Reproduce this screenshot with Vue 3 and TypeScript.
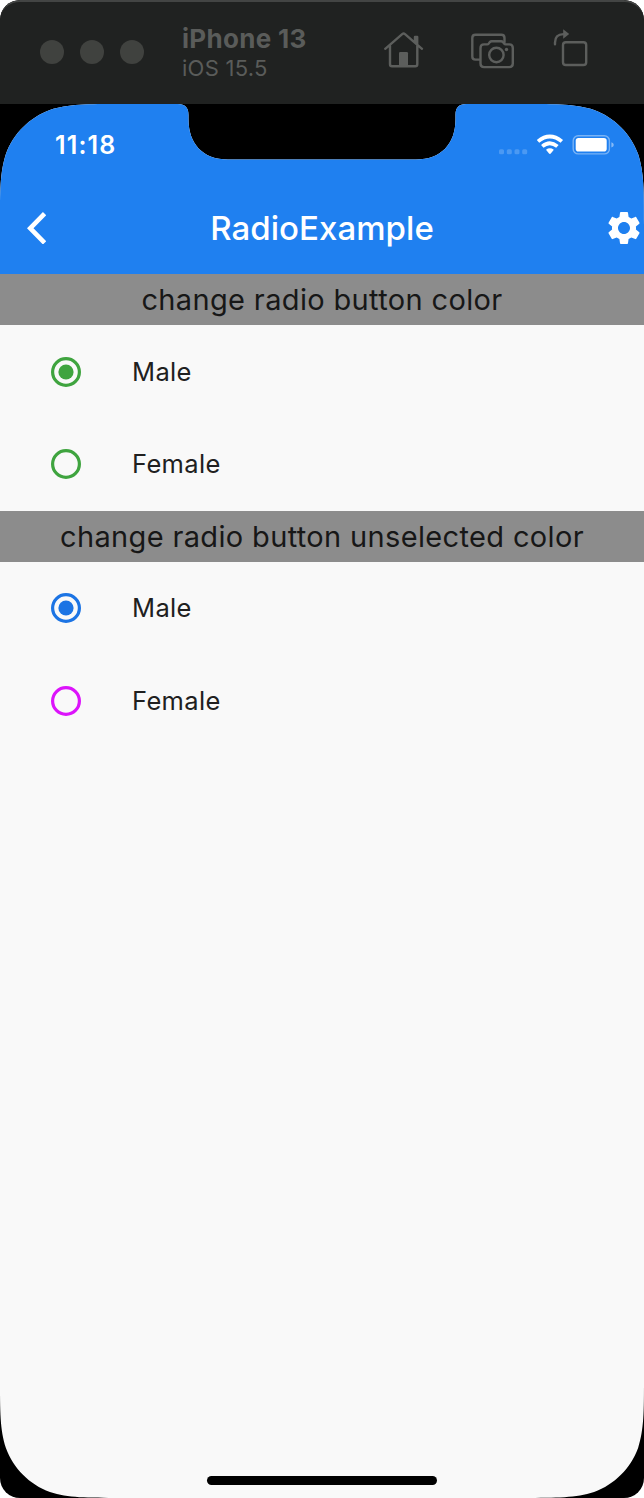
<script setup lang="ts">
import { ref } from 'vue'

interface RadioGroup {
  id: string
  title: string
  selected: string
  activeColor: string
  inactiveColor: string
}

const options: string[] = ['Male', 'Female']

const groups = ref<RadioGroup[]>([
  {
    id: 'color',
    title: 'change radio button color',
    selected: 'Male',
    activeColor: '#3fa43f',
    inactiveColor: '#3fa43f',
  },
  {
    id: 'unselected',
    title: 'change radio button unselected color',
    selected: 'Male',
    activeColor: '#1c74e4',
    inactiveColor: '#dc14fb',
  },
])

function colorOf(group: RadioGroup, option: string): string {
  return group.selected === option ? group.activeColor : group.inactiveColor
}
</script>

<template>
  <div class="window">
    <header class="titlebar">
      <div class="lights">
        <span class="light"></span>
        <span class="light"></span>
        <span class="light"></span>
      </div>
      <div class="device">
        <div class="device-name">iPhone 13</div>
        <div class="device-os">iOS 15.5</div>
      </div>
      <div class="tools">
        <svg class="tool" width="42" height="42" viewBox="383 29 42 42">
          <path d="M385.2 48.8 402.2 34.2Q403.6 33 405 34.2L422 48.8M390 46V64.2Q390 66.2 392 66.2H415.3Q417.3 66.2 417.3 64.2V46M415 41.5V37H417.2V43.8" />
          <path class="solid" d="M399 53.2q0-1.2 1.2-1.2h6.6q1.2 0 1.2 1.2V66h-9z" />
        </svg>
        <svg class="tool" width="46" height="42" viewBox="470 29 46 42">
          <path d="M479.6 59.6H475.5Q472.3 59.6 472.3 56.4V38Q472.3 34.8 475.5 34.8H501.3Q504.5 34.8 504.5 38V42.2" />
          <path d="M484 44.4h3.1q1 0 1.6-.8l1-1.3q.8-1 2.1-1h9.2q1.3 0 2.1 1l1 1.3q.6.8 1.6.8h3.6q3.5 0 3.5 3.5v15.7q0 3.500-3.500 3.500H484q-3.500 0-3.500-3.500V47.900q0-3.500 3.500-3.500z" />
          <circle cx="496.400" cy="55" r="7.200" />
          <circle class="solid" cx="506.500" cy="49.500" r="1.700" />
        </svg>
        <svg class="tool" width="36" height="42" viewBox="553 29 36 42">
          <rect x="563" y="42.300" width="23.200" height="22.700" rx="2.800" />
          <path d="M555 44.200V42.500Q555 34.200 563.500 34.100" />
          <path class="solid" d="M563.200 29.300 569.200 34 563.200 38.800z" />
        </svg>
      </div>
    </header>

    <main class="screen">
      <div class="appbar">
        <div class="statusbar">
          <span class="clock">11:18</span>
          <svg class="indicators" width="116" height="24" viewBox="498 133 116 24">
            <g fill="#fff" fill-opacity="0.2">
              <rect x="499" y="149.200" width="5" height="5" rx="1.500" />
              <rect x="506.800" y="149.200" width="5" height="5" rx="1.500" />
              <rect x="514.500" y="149.200" width="5" height="5" rx="1.500" />
              <rect x="522.200" y="149.200" width="5" height="5" rx="1.500" />
            </g>
            <g fill="none" stroke="#fff" stroke-width="3.800">
              <path d="M538 141.400Q549.800 131.500 561.800 141.400" />
              <path d="M542.300 146.400Q549.800 140 557.400 146.400" />
            </g>
            <path fill="#fff" d="M546 149.700q3.900-2.900 7.800 0l-3 3.900q-.9.900-1.800 0z" />
            <rect x="573.200" y="135.700" width="36.200" height="18.200" rx="5" fill="none" stroke="#fff" stroke-opacity="0.4" stroke-width="1.400" />
            <rect x="575.700" y="138" width="31" height="13.600" rx="2.800" fill="#fff" />
            <path fill="#fff" fill-opacity="0.45" d="M611.400 142.200q2.400.9 2.400 2.700t-2.400 2.700z" />
          </svg>
        </div>
        <div class="navbar">
          <svg class="back" width="19.200" height="32.500" viewBox="0 2.100 11.670 19.800" preserveAspectRatio="none">
            <path fill="#fff" d="M11.670 4.100 9.700 2.100 0 12l9.700 9.900 1.970-2L3.950 12z" />
          </svg>
          <h1 class="title">RadioExample</h1>
          <svg class="gear" width="40" height="40" viewBox="0 0 24 24">
            <path fill="#fff" d="M19.140 12.940c.04-.3.06-.61.06-.94 0-.32-.02-.64-.07-.94l2.030-1.580c.18-.14.23-.41.12-.61l-1.920-3.320c-.12-.22-.37-.29-.59-.22l-2.390.96c-.5-.38-1.030-.7-1.620-.94l-.36-2.540c-.04-.24-.24-.41-.48-.41h-3.840c-.24 0-.43.17-.47.41l-.36 2.540c-.59.24-1.130.57-1.620.94l-2.390-.96c-.22-.08-.47 0-.59.22L2.740 8.870c-.12.21-.08.47.12.61l2.030 1.580c-.05.3-.09.63-.09.94s.02.64.07.94l-2.030 1.580c-.18.14-.23.41-.12.61l1.920 3.320c.12.22.37.29.59.22l2.390-.96c.5.38 1.030.7 1.620.94l.36 2.540c.05.24.24.41.48.41h3.840c.24 0 .44-.17.47-.41l.36-2.540c.59-.24 1.130-.56 1.620-.94l2.390.96c.22.08.47 0 .59-.22l1.920-3.320c.12-.22.07-.47-.12-.61l-2.010-1.580zM12 15.600c-1.980 0-3.600-1.620-3.600-3.600s1.620-3.600 3.600-3.600 3.600 1.620 3.600 3.600-1.620 3.600-3.600 3.600z" />
          </svg>
        </div>
      </div>

      <section v-for="group in groups" :key="group.id" class="group">
        <h2 class="group-title">{{ group.title }}</h2>
        <div
          v-for="option in options"
          :key="option"
          class="row"
          @click="group.selected = option"
        >
          <svg class="radio" width="32" height="32" viewBox="-16 -16 32 32" :style="{ color: colorOf(group, option) }">
            <circle r="13.400" fill="none" stroke="currentColor" stroke-width="3.200" />
            <circle v-if="group.selected === option" r="7.600" fill="currentColor" />
          </svg>
          <span class="label">{{ option }}</span>
        </div>
      </section>

      <div class="home-indicator"></div>
    </main>
  </div>
</template>

<style>
body {
  margin: 0;
  background: #fff;
}
</style>

<style scoped>
.window {
  width: 644px;
  height: 1498px;
  display: flex;
  flex-direction: column;
  overflow: hidden;
  border-radius: 20px;
  background: #000;
  font-family: Inter, "Liberation Sans", sans-serif;
}
.titlebar {
  box-sizing: border-box;
  height: 104px;
  flex: none;
  display: flex;
  align-items: flex-start;
  background: #202221;
  border-top: 2px solid #434544;
  border-radius: 20px 20px 0 0;
}
.lights {
  display: flex;
  gap: 16px;
  padding: 38px 0 0 40px;
}
.light {
  width: 24px;
  height: 24px;
  border-radius: 50%;
  background: #40423f;
}
.device {
  width: 201px;
  padding: 21px 0 0 38px;
  box-sizing: border-box;
  color: #5a5c5a;
  white-space: nowrap;
}
.device-name {
  font-size: 26px;
  line-height: 32px;
  font-weight: 700;
  letter-spacing: 0.300px;
}
.device-os {
  font-size: 22px;
  line-height: 26px;
  letter-spacing: 0.250px;
}
.tools {
  display: flex;
  padding: 27px 0 0 38px;
}
.tool {
  display: block;
  margin-right: 45px;
  fill: none;
  stroke: #5c5e5c;
  stroke-width: 2.400;
  stroke-linejoin: round;
  stroke-linecap: round;
}
.tool:nth-child(2) {
  margin-right: 37px;
}
.tool:last-child {
  margin-right: 0;
}
.solid {
  fill: #5c5e5c;
  stroke: none;
}
.screen {
  position: relative;
  flex: 1;
  display: flex;
  flex-direction: column;
  background: #f9f9f9;
  clip-path: path("M0 121C0 86 0 68.600 5.900 49.900C13.400 29.500 29.500 13.400 49.900 5.900C68.600 0 86 0 121 0H178C185 0 188.500 3.500 188.500 11V15C188.500 40 203 55.500 228 55.500H416C441 55.500 455.500 40 455.500 15V11C455.500 3.500 459 0 466 0H523C558 0 575.400 0 594.100 5.900C614.500 13.400 630.600 29.500 638.100 49.900C644 68.600 644 86 644 121V1273C644 1308 644 1325.400 638.100 1344.100C630.600 1364.500 614.500 1380.600 594.100 1388.100C575.400 1394 558 1394 523 1394H121C86 1394 68.600 1394 49.900 1388.100C29.500 1380.600 13.400 1364.500 5.900 1344.100C0 1325.400 0 1308 0 1273Z");
}
.appbar {
  height: 170px;
  flex: none;
  background: #1f80f0;
  color: #fff;
}
.statusbar {
  box-sizing: border-box;
  height: 78px;
  display: flex;
  justify-content: space-between;
  align-items: flex-start;
  padding: 29px 30px 0 55px;
}
.clock {
  margin-top: -3px;
  font-size: 25px;
  line-height: 30px;
  font-weight: 600;
  letter-spacing: 1.150px;
}
.indicators {
  display: block;
}
.navbar {
  height: 92px;
  display: grid;
  grid-template-columns: 60px 1fr 60px;
  align-items: center;
}
.back {
  margin-left: 26.500px;
}
.title {
  margin: 0;
  text-align: center;
  font-size: 33px;
  line-height: 42px;
  font-weight: 500;
  letter-spacing: 0.050px;
}
.gear {
  margin-left: 20px;
}
.group-title {
  margin: 0;
  height: 51.400px;
  line-height: 52px;
  background: #8c8c8c;
  color: #171717;
  text-align: center;
  font-size: 29px;
  font-weight: 400;
  letter-spacing: 0.350px;
  white-space: nowrap;
}
.row {
  height: 92.600px;
  display: flex;
  align-items: center;
  padding-left: 50px;
}
.radio {
  display: block;
}
.label {
  margin-left: 50px;
  font-size: 25.500px;
  line-height: 32px;
  letter-spacing: 0.350px;
  color: #202020;
}
.home-indicator {
  position: absolute;
  left: 207px;
  bottom: 13px;
  width: 230px;
  height: 9px;
  border-radius: 5px;
  background: #000;
}
</style>
